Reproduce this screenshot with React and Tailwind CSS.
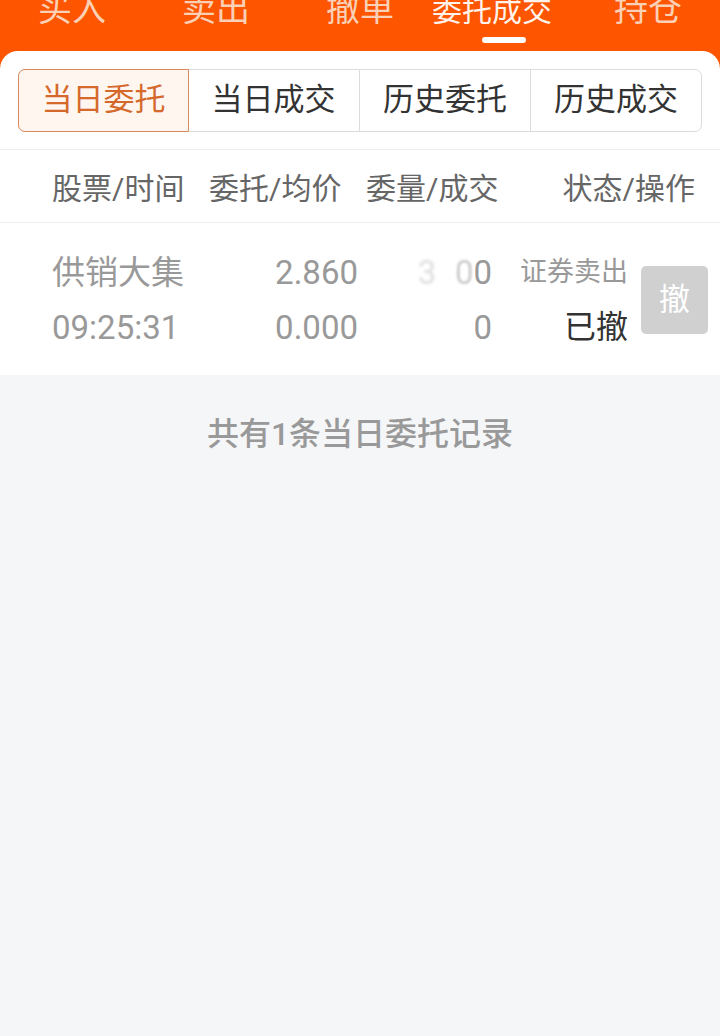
import React from "react";

const font = { fontFamily: "Roboto, 'Noto Sans CJK SC', sans-serif" };

export default function App() {
  const tabs = ["买入", "卖出", "撤单", "委托成交", "持仓"];
  const segs = ["当日委托", "当日成交", "历史委托", "历史成交"];
  return (
    <div className="min-h-screen w-[720px] bg-[#f5f6f8]" style={font}>
      <div className="bg-[#fe5500]">
        <div className="flex h-[51px] overflow-hidden">
          {tabs.map((t, i) => (
            <div key={t} className="flex w-[144px] flex-col items-center">
              {i === 3 ? (
                <div className="-mt-[5px] mr-[24px] h-[32px] text-[30px] leading-[32px] text-[#fff3ec]">
                  {t}
                </div>
              ) : (
                <div className="-mt-[9px] h-[36px] text-[34px] leading-[36px] text-[#fad0b6]">
                  {t}
                </div>
              )}
              {i === 3 && (
                <div className="mt-[10px] h-[6px] w-[44px] rounded-full bg-white" />
              )}
            </div>
          ))}
        </div>
        <div className="rounded-t-[18px] bg-white">
          <div className="px-[18px] pb-[17px] pt-[18px]">
            <div className="flex h-[63px] rounded-[7px] border border-[#dcdcdc]">
              {segs.map((s, i) => (
                <div
                  key={s}
                  className={`flex w-[171px] items-center justify-center text-[31px] ${
                    i === 0
                      ? "-m-px rounded-l-[7px] border border-[#d98a5c] bg-[#fff6f0] text-[#d4692b]"
                      : "border-l border-[#dcdcdc] text-[#333]"
                  } ${i === 1 ? "border-l-0" : ""}`}
                >
                  {s}
                </div>
              ))}
            </div>
          </div>
          <div className="flex h-[74px] items-center border-y border-[#eeeeee] pl-[52px] pt-[4px] text-[30px] text-[#666]">
            <span className="w-[157px]">股票/时间</span>
            <span className="w-[157px]">委托/均价</span>
            <span>委量/成交</span>
            <span className="ml-auto pr-[25px]">状态/操作</span>
          </div>
          <div className="flex h-[152px] items-center pt-[2px]">
            <div className="w-[200px] pl-[52px] text-[33px] leading-[55px] text-[#999]">
              <div>供销大集</div>
              <div>09:25:31</div>
            </div>
            <div className="w-[158px] text-right text-[33px] leading-[55px] text-[#999]">
              <div>2.860</div>
              <div>0.000</div>
            </div>
            <div className="w-[134px] text-right text-[33px] leading-[55px] text-[#999]">
              <div>
                <span className="text-[#ddd] blur-[1.5px]">3</span>
                <span className="text-white">0</span>
                <span className="text-[#ccc] blur-[1px]">0</span>
                <span>0</span>
              </div>
              <div>0</div>
            </div>
            <div className="w-[136px] text-right leading-[55px]">
              <div className="text-[27px] text-[#999]">证券卖出</div>
              <div className="text-[32px] text-[#333]">已撤</div>
            </div>
            <div className="ml-[13px] flex h-[68px] w-[67px] items-center justify-center rounded-[5px] bg-[#d0d0d0] text-[31px] text-white">
              撤
            </div>
          </div>
        </div>
      </div>
      <div className="pt-[41px] text-center text-[32px] font-medium leading-[36px] text-[#999]">
        共有1条当日委托记录
      </div>
    </div>
  );
}
